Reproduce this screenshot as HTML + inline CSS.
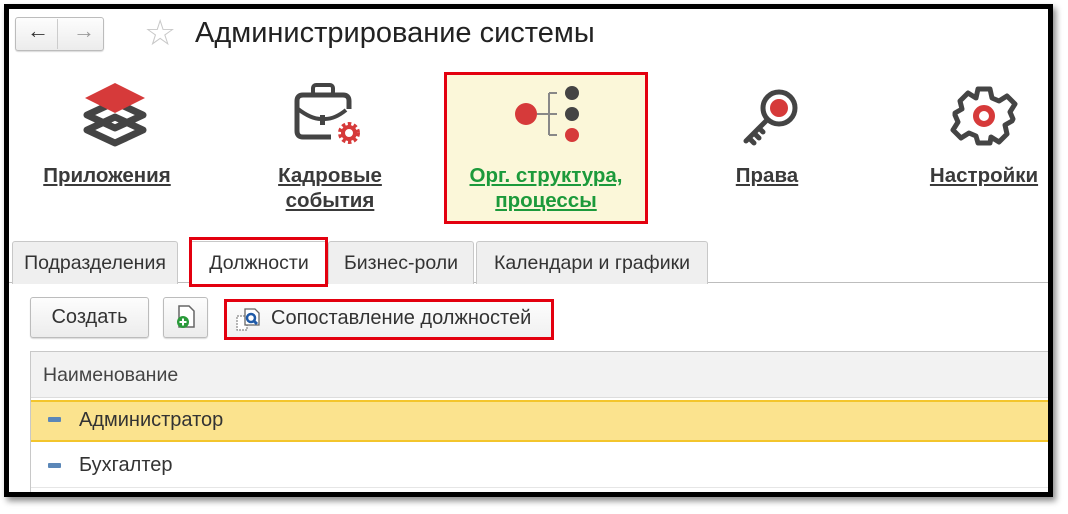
<!DOCTYPE html>
<html><head><meta charset="utf-8"><style>
*{box-sizing:border-box;margin:0;padding:0}
body{width:1068px;height:514px;background:#fff;position:relative;overflow:hidden;font-family:"Liberation Sans",sans-serif;color:#333}
.frame{position:absolute;left:4px;top:4px;width:1049px;height:493px;border:5px solid #000;box-shadow:3px 4px 6px rgba(0,0,0,.45);background:#fff;overflow:hidden}
.a{position:absolute;white-space:nowrap}
.lbl{position:absolute;font-size:20.5px;font-weight:bold;text-decoration:underline;text-align:center;color:#3a3a3a;line-height:25px;white-space:nowrap}
.tab{position:absolute;top:232px;height:43px;background:#efefef;border:1px solid #c8c8c8;border-bottom:none;border-radius:3px 3px 0 0;font-size:19.5px;line-height:42px;text-align:center;color:#333}
.btn{position:absolute;background:linear-gradient(#fdfdfd,#ececec);border:1px solid #bcbcbc;border-radius:3px;box-shadow:0 1px 1px rgba(0,0,0,.15)}
.red{position:absolute;border:3px solid #e3000f}
</style></head><body>
<div class="frame">
<div class="btn" style="left:6px;top:8px;width:89px;height:34px"></div>
<div class="a" style="left:48px;top:10px;width:1px;height:30px;background:#ccc"></div>
<div class="a" style="left:18px;top:9px;font-size:22px;color:#333">&#8592;</div>
<div class="a" style="left:64px;top:9px;font-size:22px;color:#999">&#8594;</div>
<div class="a" style="left:135px;top:3px;font-size:36px;color:#c8c8c8">&#9734;</div>
<div class="a" style="left:186px;top:8px;font-size:29px;color:#222">Администрирование системы</div>
<svg class="a" style="left:68px;top:68px" width="76" height="76" viewBox="0 0 76 76">
<path d="M38 40 L10 53 L38 66 L66 53 Z" fill="none" stroke="#444" stroke-width="7" stroke-linejoin="round"/>
<path d="M38 25 L10 38 L38 51 L66 38 Z" fill="none" stroke="#444" stroke-width="7" stroke-linejoin="round"/>
<path d="M38 6 L8 21 L38 36 L68 21 Z" fill="#d63a3a"/>
</svg>
<div class="lbl" style="left:28px;top:154px;width:140px">Приложения</div>
<svg class="a" style="left:282px;top:70px" width="80" height="70" viewBox="0 0 80 70">
<rect x="22" y="6" width="20" height="10" rx="3" fill="none" stroke="#444" stroke-width="4"/>
<path d="M12 16 H52 Q58 16 58 22 V30 M12 16 Q6 16 6 22 V52 Q6 58 12 58 H40" fill="none" stroke="#444" stroke-width="5"/>
<path d="M7 30 Q20 40 30 40 M34 40 Q44 40 55 31" fill="none" stroke="#444" stroke-width="4"/>
<rect x="29" y="36" width="5" height="10" fill="#444"/>
<circle cx="58" cy="54" r="8" fill="none" stroke="#d63a3a" stroke-width="6" stroke-dasharray="3 2.2"/>
<circle cx="58" cy="54" r="6" fill="none" stroke="#d63a3a" stroke-width="4"/>
</svg>
<div class="lbl" style="left:251px;top:154px;width:140px">Кадровые<br>события</div>
<div class="a" style="left:435px;top:63px;width:204px;height:152px;background:#fbf7d9;border:3px solid #e3000f"></div>
<svg class="a" style="left:500px;top:68px" width="80" height="80" viewBox="0 0 80 80">
<circle cx="17" cy="37" r="11" fill="#d63a3a"/>
<path d="M28 37 H40 M40 16 V58 M40 16 H48 M40 37 H48 M40 58 H48" stroke="#888" stroke-width="2" fill="none"/>
<circle cx="63" cy="16" r="7" fill="#444"/>
<circle cx="63" cy="37" r="7" fill="#444"/>
<circle cx="63" cy="58" r="7" fill="#d63a3a"/>
</svg>
<div class="lbl" style="left:445px;top:154px;width:184px;color:#1c9a3b">Орг. структура,<br>процессы</div>
<svg class="a" style="left:725px;top:76px" width="70" height="70" viewBox="0 0 70 70">
<circle cx="45" cy="23" r="16" fill="none" stroke="#444" stroke-width="5"/>
<circle cx="45" cy="23" r="9" fill="#d63a3a"/>
<path d="M33 35 L12 56 M15 53 L20 58 M20 48 L25 53 M25 43 L29 47" stroke="#444" stroke-width="5" fill="none" stroke-linecap="round"/>
</svg>
<div class="lbl" style="left:708px;top:154px;width:100px">Права</div>
<svg class="a" style="left:940px;top:72px" width="70" height="70" viewBox="0 0 70 70">
<path d="M29 8 H41 L43 17 L50 20 L58 15 L66 23 L61 31 L64 38 L63 40 L56 44 L58 53 L50 61 L42 56 L41 62 H29 L27 55 L20 52 L12 57 L4 49 L9 41 L6 34 L6 32 L13 28 L11 20 L19 12 L27 17 Z" fill="none" stroke="#444" stroke-width="5" stroke-linejoin="round"/>
<circle cx="35" cy="35" r="8" fill="none" stroke="#d63a3a" stroke-width="6"/>
</svg>
<div class="lbl" style="left:910px;top:154px;width:130px">Настройки</div>
<div class="a" style="left:0;top:273px;width:1040px;height:1px;background:#bdbdbd"></div>
<div class="tab" style="left:3px;width:166px">Подразделения</div>
<div class="tab" style="left:181px;width:138px;background:#fff;height:45px">Должности</div>
<div class="tab" style="left:319px;width:146px">Бизнес-роли</div>
<div class="tab" style="left:467px;width:232px">Календари и графики</div>
<div class="red" style="left:180px;top:228px;width:139px;height:50px"></div>
<div class="btn" style="left:21px;top:288px;width:119px;height:41px;font-size:20px;line-height:39px;text-align:center">Создать</div>
<div class="btn" style="left:154px;top:288px;width:45px;height:41px"></div>
<svg class="a" style="left:166px;top:295px" width="22" height="26" viewBox="0 0 22 26">
<path d="M4 2 H14 L19 7 V23 H4 Z" fill="#fff" stroke="#666" stroke-width="1.5"/>
<circle cx="8" cy="18" r="6" fill="#2a9a3a"/>
<path d="M8 14.5 V21.5 M4.5 18 H11.5" stroke="#fff" stroke-width="2"/>
</svg>
<div class="a" style="left:216px;top:291px;width:328px;height:39px;background:linear-gradient(#fdfdfd,#f0f0f0)"></div>
<svg class="a" style="left:226px;top:297px" width="28" height="28" viewBox="0 0 28 28">
<rect x="2" y="10" width="10" height="14" fill="#fff" stroke="#888" stroke-width="1.2" stroke-dasharray="2 1"/>
<path d="M10 3 H20 L24 7 V19 H10 Z" fill="#fff" stroke="#666" stroke-width="1.3"/>
<circle cx="16" cy="12" r="4" fill="none" stroke="#1f5aa8" stroke-width="2.5"/>
<path d="M19 15 L22 18" stroke="#1f5aa8" stroke-width="3"/>
</svg>
<div class="a" style="left:262px;top:298px;font-size:20px;color:#333">Сопоставление должностей</div>
<div class="red" style="left:215px;top:290px;width:330px;height:41px"></div>
<div class="a" style="left:21px;top:342px;width:1030px;height:160px;border-left:1px solid #c8c8c8;border-top:1px solid #c8c8c8"></div>
<div class="a" style="left:22px;top:343px;width:1030px;height:46px;background:#f2f2f2;border-bottom:1px solid #ddd;font-size:19.5px;line-height:46px;padding-left:12px;color:#444">Наименование</div>
<div class="a" style="left:22px;top:391px;width:1030px;height:42px;background:#fbe38e;border-top:2px solid #f3c52c;border-bottom:2px solid #f3c52c"></div>
<div class="a" style="left:39px;top:408px;width:13px;height:5px;background:#5b87b8;border-radius:1px"></div>
<div class="a" style="left:70px;top:400px;font-size:20px;color:#333">Администратор</div>
<div class="a" style="left:22px;top:478px;width:1030px;height:1px;background:#e6e6e6"></div>
<div class="a" style="left:39px;top:454px;width:13px;height:5px;background:#5b87b8;border-radius:1px"></div>
<div class="a" style="left:70px;top:445px;font-size:20px;color:#333">Бухгалтер</div>
</div>
</body></html>
